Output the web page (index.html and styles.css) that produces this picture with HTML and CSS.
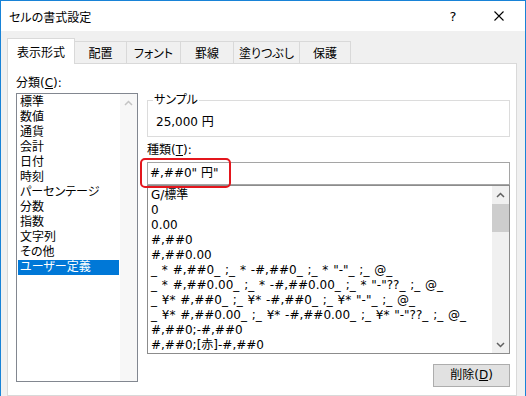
FILE: index.html
```html
<!DOCTYPE html>
<html lang="ja">
<head>
<meta charset="utf-8">
<title>セルの書式設定</title>
<link rel="stylesheet" href="styles.css">
</head>
<body>
<div class="window">
  <div class="titlebar">
    <span class="title">セルの書式設定</span>
    <span class="tb-btn help">?</span>
    <span class="tb-btn close"><svg width="10" height="10" viewBox="0 0 10 10"><path d="M0.5 0.5 L9.5 9.5 M9.5 0.5 L0.5 9.5" stroke="#000" stroke-width="1.1" fill="none"/></svg></span>
  </div>
  <div class="body">
    <div class="tabs">
      <div class="tab active t1">表示形式</div>
      <div class="tab t2">配置</div>
      <div class="tab t3">フォント</div>
      <div class="tab t4">罫線</div>
      <div class="tab t5">塗りつぶし</div>
      <div class="tab t6">保護</div>
    </div>
    <div class="panel">
      <div class="left">
        <div class="label">分類(<u>C</u>):</div>
        <div class="listbox cat">
          <div class="items">
            <div class="item">標準</div>
            <div class="item">数値</div>
            <div class="item">通貨</div>
            <div class="item">会計</div>
            <div class="item">日付</div>
            <div class="item">時刻</div>
            <div class="item">パーセンテージ</div>
            <div class="item">分数</div>
            <div class="item">指数</div>
            <div class="item">文字列</div>
            <div class="item">その他</div>
            <div class="item sel">ユーザー定義</div>
          </div>
          <div class="vscroll disabled">
            <div class="arrow"><svg width="9" height="6" viewBox="0 0 9 6"><polyline points="1,5 4.5,1.5 8,5" fill="none" stroke="#c4c4c4" stroke-width="1.5"/></svg></div>
          </div>
        </div>
      </div>
      <div class="right">
        <fieldset class="sample">
          <legend>サンプル</legend>
          <div class="sample-value">25,000 円</div>
        </fieldset>
        <div class="label type-label">種類(<u>T</u>):</div>
        <div class="input-wrap">
          <div class="input">#,##0" 円"</div>
          <div class="highlight"></div>
        </div>
        <div class="listbox fmt">
          <div class="items">
            <div class="item">G/標準</div>
            <div class="item">0</div>
            <div class="item">0.00</div>
            <div class="item">#,##0</div>
            <div class="item">#,##0.00</div>
            <div class="item">_ * #,##0_ ;_ * -#,##0_ ;_ * "-"_ ;_ @_</div>
            <div class="item">_ * #,##0.00_ ;_ * -#,##0.00_ ;_ * "-"??_ ;_ @_</div>
            <div class="item">_ ¥* #,##0_ ;_ ¥* -#,##0_ ;_ ¥* "-"_ ;_ @_</div>
            <div class="item">_ ¥* #,##0.00_ ;_ ¥* -#,##0.00_ ;_ ¥* "-"??_ ;_ @_</div>
            <div class="item">#,##0;-#,##0</div>
            <div class="item">#,##0;[赤]-#,##0</div>
          </div>
          <div class="vscroll">
            <div class="arrow"><svg width="9" height="6" viewBox="0 0 9 6"><polyline points="1,5 4.5,1.5 8,5" fill="none" stroke="#606060" stroke-width="1.5"/></svg></div>
            <div class="thumb"></div>
            <div class="track"></div>
            <div class="arrow"><svg width="9" height="6" viewBox="0 0 9 6"><polyline points="1,1 4.5,4.5 8,1" fill="none" stroke="#606060" stroke-width="1.5"/></svg></div>
          </div>
        </div>
        <div class="actions">
          <button class="btn" type="button">削除(<u>D</u>)</button>
        </div>
      </div>
    </div>
  </div>
</div>
</body>
</html>
```
FILE: styles.css
```css
html, body {
  margin: 0;
  padding: 0;
}
body {
  width: 526px;
  height: 396px;
  overflow: hidden;
  font-family: "DejaVu Sans", "Noto Sans CJK JP", sans-serif;
  font-size: 12px;
  font-feature-settings: "palt";
  color: #000;
  background: #f0f0f0;
}
.window {
  width: 526px;
  height: 396px;
  box-sizing: border-box;
  border: 1px solid #1883d7;
  border-bottom: none;
  background: #f0f0f0;
  display: flex;
  flex-direction: column;
  overflow: hidden;
}
.titlebar {
  height: 30px;
  flex: none;
  background: #fff;
  display: flex;
  align-items: center;
  padding: 0 3px 0 8px;
}
.title {
  flex: 1;
  font-family: "Noto Sans CJK JP", sans-serif;
  font-size: 12px;
  line-height: 15px;
}
.tb-btn {
  width: 46px;
  height: 30px;
  display: flex;
  align-items: center;
  justify-content: center;
}
.help {
  font-family: "DejaVu Sans", sans-serif;
  font-size: 13px;
}
.body {
  flex: 1;
  min-height: 0;
  padding: 7px 8px 0 6px;
  display: flex;
  flex-direction: column;
}
.tabs {
  height: 25px;
  flex: none;
  display: flex;
  align-items: flex-end;
}
.tab {
  box-sizing: border-box;
  height: 22px;
  border: 1px solid #d9d9d9;
  border-bottom: none;
  background: #f0f0f0;
  display: flex;
  align-items: center;
  justify-content: center;
  margin-left: -1px;
  font-family: "Noto Sans CJK JP", sans-serif;
  line-height: 15px;
}
.tab.active {
  height: 26px;
  margin-left: 0;
  margin-bottom: -1px;
  background: #fff;
  position: relative;
  z-index: 1;
  padding-bottom: 1px;
}
.t1 { width: 68px; }
.t2 { width: 53px; }
.t3 { width: 55px; }
.t4 { width: 54px; }
.t5 { width: 67px; }
.t6 { width: 52px; }
.panel {
  flex: 1;
  background: #fff;
  border: 1px solid #d9d9d9;
  padding: 12px 0 0 8px;
  display: grid;
  grid-template-columns: 122px 363px;
  column-gap: 9px;
  align-items: start;
  align-content: start;
}
.label {
  line-height: 15px;
  height: 15px;
  white-space: nowrap;
}
.left .label {
  margin-bottom: 2px;
}
.listbox {
  box-sizing: border-box;
  display: flex;
  overflow: hidden;
  background: #fff;
}
.listbox .items {
  flex: 1;
  min-width: 0;
  overflow: hidden;
}
.item {
  height: 15px;
  line-height: 15px;
  white-space: pre;
}
.cat {
  height: 289px;
  border: 1px solid #828790;
}
.cat .items {
  padding: 1px;
}
.cat .item {
  padding-left: 2px;
}
.cat .item.sel {
  background: #0078d7;
  color: #fff;
}
.vscroll {
  width: 17px;
  flex: none;
  background: #f0f0f0;
  display: flex;
  flex-direction: column;
}
.vscroll.disabled {
  background: #f7f7f7;
}
.arrow {
  height: 17px;
  flex: none;
  display: flex;
  align-items: center;
  justify-content: center;
}
.thumb {
  height: 28px;
  margin-top: 1px;
  background: #cdcdcd;
  flex: none;
}
.track {
  flex: 1;
}
.sample {
  margin: 17px 0 0;
  padding: 0 0 6px 5px;
  border: 1px solid #dcdcdc;
  min-width: 0;
}
.sample legend {
  padding: 0 1px;
  line-height: 15px;
}
.sample-value {
  padding: 7px 0 0 3px;
  line-height: 15px;
}
.type-label {
  margin-top: 6px;
}
.input-wrap {
  margin-top: 4px;
  position: relative;
}
.input {
  height: 23px;
  box-sizing: border-box;
  border: 1px solid #a5a5a5;
  padding: 1px 0 0 2px;
  line-height: 19px;
  white-space: pre;
}
.highlight {
  position: absolute;
  left: -7px;
  top: -4px;
  width: 91px;
  height: 30px;
  box-sizing: border-box;
  border: 2px solid #e3161d;
  border-radius: 5px;
}
.fmt {
  height: 169px;
  border: 1px solid #8c8c8c;
}
.fmt .items {
  padding: 2px 0 0 3px;
}
.fmt .item {
  word-spacing: 1px;
}
.actions {
  display: flex;
  justify-content: flex-end;
  margin-top: 10px;
}
.btn {
  width: 77px;
  height: 23px;
  box-sizing: border-box;
  border: 1px solid #adadad;
  background: #e1e1e1;
  font: inherit;
  line-height: 15px;
  color: #000;
  padding: 0;
}
```
